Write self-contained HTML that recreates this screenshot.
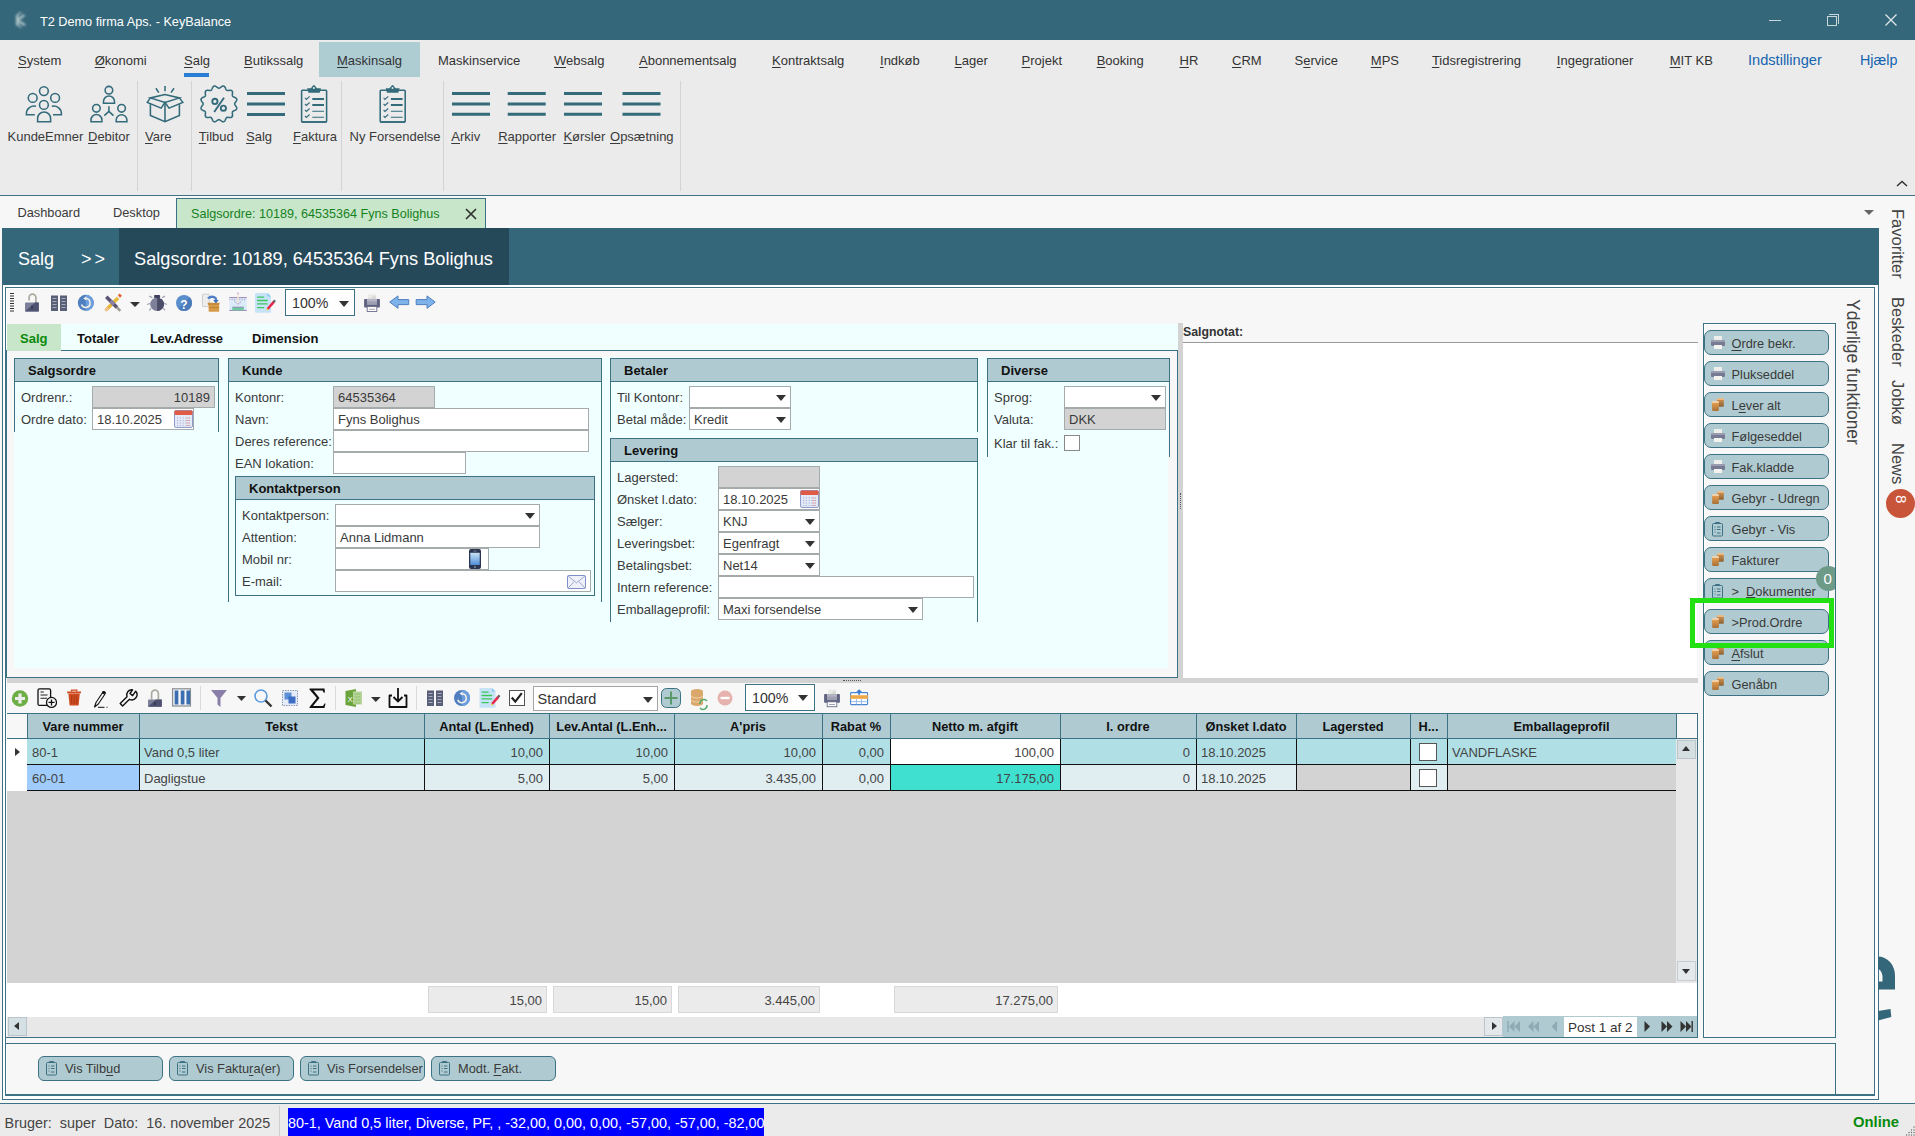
<!DOCTYPE html>
<html><head><meta charset="utf-8">
<style>
*{margin:0;padding:0;box-sizing:border-box}
html,body{width:1915px;height:1136px;overflow:hidden;background:#F7F7F7;font-family:"Liberation Sans",sans-serif;font-size:13px;color:#333}
.a{position:absolute}
.t{position:absolute;white-space:nowrap;line-height:1}
u{text-decoration:underline;text-underline-offset:2px}
svg{position:absolute;overflow:visible}
/* title */
#title{left:0;top:0;width:1915px;height:40px;background:#35677A}
#menu{left:0;top:40px;width:1915px;height:155px;background:#EBEBEB}
.mi{position:absolute;top:54px;font-size:13px;color:#3A3A3A;white-space:nowrap;line-height:14px}
.rl{position:absolute;top:130px;font-size:13px;color:#3A3A3A;white-space:nowrap;line-height:14px}
.rsep{position:absolute;top:81px;width:1px;height:110px;background:#D4D4D4}
.gh{position:absolute;height:24px;background:#AFCBD1;border:1px solid #3D7184;border-bottom:2px solid #3D7184;font-weight:bold;color:#111;font-size:13px;line-height:20px;padding-left:13px}
.gs{position:absolute;width:1px;background:#3D7184}
.lb{position:absolute;font-size:13px;color:#3A3A3A;white-space:nowrap;line-height:14px}
.in{position:absolute;height:22px;background:#fff;border:1px solid #C8C8C8;font-size:13px;color:#333;line-height:20px;padding-left:4px;white-space:nowrap}
.gray{background:#D3D3D3}
.dd{position:absolute;width:0;height:0;border-left:5px solid transparent;border-right:5px solid transparent;border-top:6px solid #333}
</style></head><body>
<svg style="left:0;top:0" width="0" height="0"><defs><linearGradient id="gF" x1="0" y1="0" x2="0" y2="1"><stop offset="0" stop-color="#F2D4AE"/><stop offset="0.17" stop-color="#F0CDA0"/><stop offset="0.22" stop-color="#E09A4E"/><stop offset="1" stop-color="#A87238"/></linearGradient><linearGradient id="gB" x1="0" y1="0" x2="0" y2="1"><stop offset="0" stop-color="#EBBE86"/><stop offset="0.17" stop-color="#E8B880"/><stop offset="0.22" stop-color="#C98B4C"/><stop offset="1" stop-color="#8E6232"/></linearGradient></defs></svg>
<!-- TITLE BAR -->
<div id="title" class="a">
  <svg style="left:10px;top:9px" width="20" height="22"><defs><filter id="bl" x="-50%" y="-50%" width="200%" height="200%"><feGaussianBlur stdDeviation="1.1"/></filter></defs><g filter="url(#bl)" stroke="#A9BFC5" fill="none" stroke-linecap="round"><path d="M7.2 6.8V15.6" stroke-width="2.6"/><path d="M8 11L13.6 6.5" stroke-width="2.4"/><path d="M8.6 12.2L14.2 15.6" stroke-width="2.4"/><path d="M6.8 6.5L10.6 3.6M8 15.4L10.6 18.4" stroke-width="1.4"/></g></svg>
  <div class="t" style="left:40px;top:16px;font-size:12.7px;color:#fff">T2 Demo firma Aps. - KeyBalance</div>
  <div class="a" style="left:1769px;top:20px;width:12px;height:1px;background:#C9D6DA"></div>
  <div class="a" style="left:1829px;top:14px;width:10px;height:10px;border:1px solid #C9D6DA;border-left:0;border-bottom:0"></div>
  <div class="a" style="left:1827px;top:16px;width:10px;height:10px;border:1px solid #C9D6DA"></div>
  <svg style="left:1885px;top:14px" width="12" height="12"><path d="M0.5 0.5L11.5 11.5M11.5 0.5L0.5 11.5" stroke="#E2EAEC" stroke-width="1.2"/></svg>
</div>
<!-- MENU + RIBBON -->
<div id="menu" class="a"></div>
<div class="a" style="left:319px;top:42px;width:101px;height:35px;background:#AECDD3"></div>
<div class="a" style="left:184px;top:73px;width:25px;height:4px;background:#2A7FD4"></div>
<div class="mi" style="left:18px;color:#333"><u>S</u>ystem</div>
<div class="mi" style="left:94.7px;color:#333"><u>Ø</u>konomi</div>
<div class="mi" style="left:184px;color:#333"><u>S</u>alg</div>
<div class="mi" style="left:244px;color:#333"><u>B</u>utikssalg</div>
<div class="mi" style="left:337px;color:#333"><u>M</u>askinsalg</div>
<div class="mi" style="left:438px;color:#333">Maskinservice</div>
<div class="mi" style="left:554px;color:#333"><u>W</u>ebsalg</div>
<div class="mi" style="left:639px;color:#333"><u>A</u>bonnementsalg</div>
<div class="mi" style="left:772px;color:#333"><u>K</u>ontraktsalg</div>
<div class="mi" style="left:880px;color:#333"><u>I</u>ndkøb</div>
<div class="mi" style="left:954.6px;color:#333"><u>L</u>ager</div>
<div class="mi" style="left:1021.6px;color:#333"><u>P</u>rojekt</div>
<div class="mi" style="left:1096.7px;color:#333"><u>B</u>ooking</div>
<div class="mi" style="left:1179.5px;color:#333"><u>H</u>R</div>
<div class="mi" style="left:1232px;color:#333"><u>C</u>RM</div>
<div class="mi" style="left:1294.6px;color:#333">S<u>e</u>rvice</div>
<div class="mi" style="left:1370.8px;color:#333"><u>M</u>PS</div>
<div class="mi" style="left:1431.9px;color:#333"><u>T</u>idsregistrering</div>
<div class="mi" style="left:1556.8px;color:#333"><u>I</u>ngegrationer</div>
<div class="mi" style="left:1669.7px;color:#333"><u>M</u>IT KB</div>
<div class="mi" style="left:1748px;top:53px;font-size:14.6px;color:#1565B0">Indstillinger</div>
<div class="mi" style="left:1860px;top:53px;font-size:14.3px;color:#1565B0">Hjælp</div>
<svg style="left:1896px;top:180px" width="12" height="8"><path d="M1 6L6 1.5L11 6" fill="none" stroke="#333" stroke-width="1.5"/></svg>

<div class="rsep" style="left:137px"></div>
<div class="rsep" style="left:191px"></div>
<div class="rsep" style="left:341px"></div>
<div class="rsep" style="left:443px"></div>
<div class="rsep" style="left:680px"></div>
<!-- KundeEmner -->
<svg style="left:0;top:0" width="700" height="130" fill="none" stroke="#336B7B" stroke-width="1.55">
<circle cx="43.9" cy="91.1" r="4.4"/>
<circle cx="32.7" cy="97.9" r="4.4"/>
<circle cx="55.1" cy="97.9" r="4.4"/>
<circle cx="43.9" cy="104.9" r="4.4"/>
<path d="M37.6 121.7V118.5A6.5 6.5 0 0 1 50.6 118.5V121.7Z"/>
<path d="M36 106.3A7.6 7.6 0 0 0 26.4 113.5V114.7H34.8"/>
<path d="M51.8 106.3A7.6 7.6 0 0 1 61.4 113.5V114.7H53"/>
<!-- Debitor -->
<circle cx="108.9" cy="90.2" r="3.8"/>
<path d="M103.5 103.2V101.5A5.5 5.5 0 0 1 114.5 101.5V103.2Z"/>
<circle cx="96.4" cy="108.3" r="3.8"/>
<path d="M91 121.7V120A5.45 5.45 0 0 1 101.9 120V121.7Z"/>
<circle cx="121.6" cy="108.3" r="3.8"/>
<path d="M116.2 121.7V120A5.35 5.35 0 0 1 126.9 120V121.7Z"/>
<path d="M108.9 106.2V111.4L104.3 115.6M108.9 111.4L113.5 115.6"/>
<!-- Vare -->
<path d="M155.9 88.2L158.8 92.6M165 86V91.3M174 88.2L171 92.6"/>
<path d="M165 94.5L150.4 97.9L165 102.4L179.4 97.9Z"/>
<path d="M150.4 97.9L147.3 102.4L161.1 108.1L165 102.4L169 108.1L182.8 102.4L179.4 97.9"/>
<path d="M150.4 104.2V115.4L165 121.7L179.4 115.4V104.2M165 102.4V121.7"/>
<!-- Tilbud -->
<path d="M218.90 88.15 L219.18 88.12 L219.45 88.04 L219.74 87.91 L220.03 87.74 L220.33 87.54 L220.64 87.31 L220.97 87.07 L221.30 86.83 L221.64 86.60 L221.99 86.40 L222.34 86.23 L222.68 86.11 L223.02 86.04 L223.36 86.03 L223.68 86.08 L223.98 86.19 L224.26 86.37 L224.52 86.60 L224.76 86.88 L224.98 87.20 L225.18 87.55 L225.36 87.91 L225.53 88.29 L225.69 88.66 L225.84 89.01 L226.00 89.34 L226.17 89.64 L226.35 89.89 L226.55 90.10 L226.78 90.26 L227.03 90.37 L227.31 90.44 L227.62 90.47 L227.96 90.47 L228.32 90.45 L228.71 90.40 L229.11 90.36 L229.51 90.31 L229.92 90.29 L230.33 90.28 L230.71 90.31 L231.07 90.38 L231.40 90.49 L231.70 90.65 L231.95 90.85 L232.15 91.10 L232.31 91.40 L232.42 91.73 L232.49 92.09 L232.52 92.47 L232.51 92.88 L232.49 93.29 L232.44 93.69 L232.40 94.09 L232.35 94.48 L232.33 94.84 L232.33 95.18 L232.36 95.49 L232.43 95.77 L232.54 96.03 L232.70 96.25 L232.91 96.45 L233.16 96.63 L233.46 96.80 L233.79 96.96 L234.14 97.11 L234.51 97.27 L234.89 97.44 L235.25 97.62 L235.60 97.82 L235.92 98.04 L236.20 98.28 L236.43 98.54 L236.61 98.82 L236.72 99.12 L236.77 99.44 L236.76 99.78 L236.69 100.12 L236.57 100.46 L236.40 100.81 L236.20 101.16 L235.97 101.50 L235.73 101.83 L235.49 102.16 L235.26 102.47 L235.06 102.77 L234.89 103.06 L234.76 103.35 L234.68 103.62 L234.65 103.90 L234.68 104.18 L234.76 104.45 L234.89 104.74 L235.06 105.03 L235.26 105.33 L235.49 105.64 L235.73 105.97 L235.97 106.30 L236.20 106.64 L236.40 106.99 L236.57 107.34 L236.69 107.68 L236.76 108.02 L236.77 108.36 L236.72 108.68 L236.61 108.98 L236.43 109.26 L236.20 109.52 L235.92 109.76 L235.60 109.98 L235.25 110.18 L234.89 110.36 L234.51 110.53 L234.14 110.69 L233.79 110.84 L233.46 111.00 L233.16 111.17 L232.91 111.35 L232.70 111.55 L232.54 111.78 L232.43 112.03 L232.36 112.31 L232.33 112.62 L232.33 112.96 L232.35 113.32 L232.40 113.71 L232.44 114.11 L232.49 114.51 L232.51 114.92 L232.52 115.33 L232.49 115.71 L232.42 116.07 L232.31 116.40 L232.15 116.70 L231.95 116.95 L231.70 117.15 L231.40 117.31 L231.07 117.42 L230.71 117.49 L230.33 117.52 L229.92 117.51 L229.51 117.49 L229.11 117.44 L228.71 117.40 L228.32 117.35 L227.96 117.33 L227.62 117.33 L227.31 117.36 L227.03 117.43 L226.78 117.54 L226.55 117.70 L226.35 117.91 L226.17 118.16 L226.00 118.46 L225.84 118.79 L225.69 119.14 L225.53 119.51 L225.36 119.89 L225.18 120.25 L224.98 120.60 L224.76 120.92 L224.52 121.20 L224.26 121.43 L223.98 121.61 L223.68 121.72 L223.36 121.77 L223.02 121.76 L222.68 121.69 L222.34 121.57 L221.99 121.40 L221.64 121.20 L221.30 120.97 L220.97 120.73 L220.64 120.49 L220.33 120.26 L220.03 120.06 L219.74 119.89 L219.45 119.76 L219.18 119.68 L218.90 119.65 L218.62 119.68 L218.35 119.76 L218.06 119.89 L217.77 120.06 L217.47 120.26 L217.16 120.49 L216.83 120.73 L216.50 120.97 L216.16 121.20 L215.81 121.40 L215.46 121.57 L215.12 121.69 L214.78 121.76 L214.44 121.77 L214.12 121.72 L213.82 121.61 L213.54 121.43 L213.28 121.20 L213.04 120.92 L212.82 120.60 L212.62 120.25 L212.44 119.89 L212.27 119.51 L212.11 119.14 L211.96 118.79 L211.80 118.46 L211.63 118.16 L211.45 117.91 L211.25 117.70 L211.03 117.54 L210.77 117.43 L210.49 117.36 L210.18 117.33 L209.84 117.33 L209.48 117.35 L209.09 117.40 L208.69 117.44 L208.29 117.49 L207.88 117.51 L207.47 117.52 L207.09 117.49 L206.73 117.42 L206.40 117.31 L206.10 117.15 L205.85 116.95 L205.65 116.70 L205.49 116.40 L205.38 116.07 L205.31 115.71 L205.28 115.33 L205.29 114.92 L205.31 114.51 L205.36 114.11 L205.40 113.71 L205.45 113.32 L205.47 112.96 L205.47 112.62 L205.44 112.31 L205.37 112.03 L205.26 111.78 L205.10 111.55 L204.89 111.35 L204.64 111.17 L204.34 111.00 L204.01 110.84 L203.66 110.69 L203.29 110.53 L202.91 110.36 L202.55 110.18 L202.20 109.98 L201.88 109.76 L201.60 109.52 L201.37 109.26 L201.19 108.98 L201.08 108.68 L201.03 108.36 L201.04 108.02 L201.11 107.68 L201.23 107.34 L201.40 106.99 L201.60 106.64 L201.83 106.30 L202.07 105.97 L202.31 105.64 L202.54 105.33 L202.74 105.03 L202.91 104.74 L203.04 104.45 L203.12 104.18 L203.15 103.90 L203.12 103.62 L203.04 103.35 L202.91 103.06 L202.74 102.77 L202.54 102.47 L202.31 102.16 L202.07 101.83 L201.83 101.50 L201.60 101.16 L201.40 100.81 L201.23 100.46 L201.11 100.12 L201.04 99.78 L201.03 99.44 L201.08 99.12 L201.19 98.82 L201.37 98.54 L201.60 98.28 L201.88 98.04 L202.20 97.82 L202.55 97.62 L202.91 97.44 L203.29 97.27 L203.66 97.11 L204.01 96.96 L204.34 96.80 L204.64 96.63 L204.89 96.45 L205.10 96.25 L205.26 96.03 L205.37 95.77 L205.44 95.49 L205.47 95.18 L205.47 94.84 L205.45 94.48 L205.40 94.09 L205.36 93.69 L205.31 93.29 L205.29 92.88 L205.28 92.47 L205.31 92.09 L205.38 91.73 L205.49 91.40 L205.65 91.10 L205.85 90.85 L206.10 90.65 L206.40 90.49 L206.73 90.38 L207.09 90.31 L207.47 90.28 L207.88 90.29 L208.29 90.31 L208.69 90.36 L209.09 90.40 L209.48 90.45 L209.84 90.47 L210.18 90.47 L210.49 90.44 L210.77 90.37 L211.03 90.26 L211.25 90.10 L211.45 89.89 L211.63 89.64 L211.80 89.34 L211.96 89.01 L212.11 88.66 L212.27 88.29 L212.44 87.91 L212.62 87.55 L212.82 87.20 L213.04 86.88 L213.28 86.60 L213.54 86.37 L213.82 86.19 L214.12 86.08 L214.44 86.03 L214.78 86.04 L215.12 86.11 L215.46 86.23 L215.81 86.40 L216.16 86.60 L216.50 86.83 L216.83 87.07 L217.16 87.31 L217.47 87.54 L217.77 87.74 L218.06 87.91 L218.35 88.04 L218.62 88.12 L218.90 88.15Z"/>
<!-- Salg lines -->
<path d="M247 93.4H285M247 103.9H285M247 114.4H285" stroke-width="3"/>
<!-- Faktura clipboard -->
<g id="clip1">
<rect x="301.6" y="90.3" width="25" height="31.6" rx="0.8"/>
<path d="M301.6 122H326.6" stroke-width="1.6"/>
<path d="M307.1 88.3H310.8L313.3 85.2Q313.9 84.6 314.5 85.2L317 88.3H321L319.7 92.7H308.4Z" fill="#336B7B" stroke="none"/>
<circle cx="313.9" cy="88.1" r="1" fill="#EBEBEB" stroke="none"/>
<path d="M305 97.9L306.4 99.4L309.6 96.4M305 104L306.4 105.5L309.6 102.5M305 110L306.4 111.5L309.6 108.5M305 116L306.4 117.5L309.6 114.5" stroke-width="1.1"/>
<path d="M312.3 99H324M312.3 105H324" stroke-width="1.8"/>
<path d="M312.3 111.2H324M312.3 117.3H324" stroke-width="1.1"/>
</g>
<g transform="translate(78.6 0)">
<rect x="301.6" y="90.3" width="25" height="31.6" rx="0.8"/>
<path d="M301.6 122H326.6" stroke-width="1.6"/>
<path d="M307.1 88.3H310.8L313.3 85.2Q313.9 84.6 314.5 85.2L317 88.3H321L319.7 92.7H308.4Z" fill="#336B7B" stroke="none"/>
<circle cx="313.9" cy="88.1" r="1" fill="#EBEBEB" stroke="none"/>
<path d="M305 97.9L306.4 99.4L309.6 96.4M305 104L306.4 105.5L309.6 102.5M305 110L306.4 111.5L309.6 108.5M305 116L306.4 117.5L309.6 114.5" stroke-width="1.1"/>
<path d="M312.3 99H324M312.3 105H324" stroke-width="1.8"/>
<path d="M312.3 111.2H324M312.3 117.3H324" stroke-width="1.1"/>
</g>
<path d="M452 93.4H490M452 103.9H490M452 114.2H490M507.7 93.4H545.7M507.7 103.9H545.7M507.7 114.2H545.7M564 93.4H602M564 103.9H602M564 114.2H602M622.5 93.4H660.5M622.5 103.9H660.5M622.5 114.2H660.5" stroke-width="3"/>
</svg>
<svg style="left:0;top:0" width="240" height="130" fill="none" stroke="#336B7B"><circle cx="214.9" cy="101.4" r="2.6" stroke-width="1.9"/><circle cx="223.4" cy="108.2" r="2.6" stroke-width="1.9"/><path d="M224 97.8L214.2 112" stroke-width="1.9"/></svg>
<div class="rl" style="left:7.5px">KundeEmner</div>
<div class="rl" style="left:88px"><u>D</u>ebitor</div>
<div class="rl" style="left:145px"><u>V</u>are</div>
<div class="rl" style="left:198.8px"><u>T</u>ilbud</div>
<div class="rl" style="left:246px"><u>S</u>alg</div>
<div class="rl" style="left:293px"><u>F</u>aktura</div>
<div class="rl" style="left:349.5px">Ny Forsendelse</div>
<div class="rl" style="left:451.3px"><u>A</u>rkiv</div>
<div class="rl" style="left:498.2px"><u>R</u>apporter</div>
<div class="rl" style="left:563.4px"><u>K</u>ørsler</div>
<div class="rl" style="left:610px"><u>O</u>psætning</div>
<div class="a" style="left:0;top:195px;width:1915px;height:1px;background:#3D7184"></div>

<div class="a" style="left:0;top:196px;width:1915px;height:31px;background:#F7F7F7"></div>
<div class="t" style="left:17.4px;top:206.5px;font-size:12.8px;color:#3A3A3A">Dashboard</div>
<div class="t" style="left:113px;top:206.5px;font-size:12.8px;color:#3A3A3A">Desktop</div>
<div class="a" style="left:176px;top:198px;width:310px;height:30px;background:#C8E6C9;border:1px solid #3D7184;border-bottom:0"></div>
<div class="t" style="left:191px;top:207.5px;font-size:12.6px;color:#16821E">Salgsordre: 10189, 64535364 Fyns Bolighus</div>
<svg style="left:465px;top:208px" width="12" height="12"><path d="M1 1L11 11M11 1L1 11" stroke="#333" stroke-width="1.7"/></svg>
<div class="dd" style="left:1864px;top:210px;border-left-width:5px;border-right-width:5px;border-top:5px solid #666"></div>
<!-- header band -->
<div class="a" style="left:2px;top:228px;width:1877px;height:57px;background:#35677A"></div>
<div class="a" style="left:119px;top:228px;width:390px;height:57px;background:#26495A"></div>
<div class="t" style="left:18px;top:250px;font-size:18px;color:#fff">Salg</div>
<div class="t" style="left:81px;top:250px;font-size:18px;color:#fff;letter-spacing:3px">&gt;&gt;</div>
<div class="t" style="left:134px;top:250px;font-size:18.2px;color:#fff">Salgsordre: 10189, 64535364 Fyns Bolighus</div>

<!-- outer frame -->
<div class="a" style="left:2px;top:285px;width:1877px;height:815px;border:1px solid #3D7184;border-top:0;background:#fff"></div>
<div class="a" style="left:5px;top:287px;width:1870px;height:809px;border:1px solid #3D7184;border-bottom:2px solid #3D7184;background:#F7F7F7;box-shadow:inset 1px 1px 0 #fff"></div>
<!-- toolbar -->
<svg style="left:0;top:0" width="450" height="330">
<path d="M10 293.5H14M10 296H14M10 298.5H14M10 301H14M10 303.5H14M10 306H14M10 308.5H14M10 311H14" stroke="#333" stroke-width="1.2"/>
<!-- lock -->
<path d="M29.1 300.5V297.5A3.4 3.4 0 0 1 35.9 297.5V303" fill="none" stroke="#A9AAA0" stroke-width="1.7"/>
<rect x="25" y="302.5" width="13.8" height="9" rx="0.8" fill="#7C7F9A"/>
<path d="M25 311.5L35 302.5H38.8V311.5Z" fill="#4E5270"/>
<path d="M32 305.5V309" stroke="#33364A" stroke-width="1.6"/>
<!-- columns -->
<rect x="51" y="295.5" width="7" height="15.5" fill="#5A5F78"/>
<rect x="60" y="295.5" width="7" height="15.5" fill="#5A5F78"/>
<path d="M52.5 298.5H56.5M52.5 301.5H56.5M52.5 304.5H56.5M52.5 307.5H56.5M61.5 298.5H65.5M61.5 301.5H65.5M61.5 304.5H65.5M61.5 307.5H65.5" stroke="#A9ADBF" stroke-width="1"/>
<!-- refresh -->
<circle cx="85.8" cy="302.8" r="8" fill="#4F7FBF"/>
<path d="M85.8 294.8A8 8 0 0 1 93.8 302.8A8 8 0 0 1 85.8 310.8Z" fill="#6C9EDD"/>
<path d="M85.6 298.6A4.4 4.4 0 1 1 81.5 304.5" fill="none" stroke="#F4F0E8" stroke-width="1.5"/>
<path d="M83.3 298.4L86.3 296.2V300.6Z" fill="#F4F0E8"/>
<!-- pencil cross -->
<path d="M106.5 309.5L118.5 297.5" stroke="#E6B838" stroke-width="3.4"/>
<path d="M105.3 310.6L108 307.9" stroke="#F0C090" stroke-width="3"/>
<path d="M118 298L119 297" stroke="#E8EEF0" stroke-width="3.4"/>
<path d="M119 296.5L120.8 294.7" stroke="#E2602E" stroke-width="3.2"/>
<path d="M106.3 296.8L117 307.5" stroke="#5C5474" stroke-width="3.6"/>
<path d="M110.5 301L114 304.5" stroke="#8A80A8" stroke-width="3.6"/>
<path d="M117 307.5L120.3 310.8" stroke="#9C9C94" stroke-width="2.6"/>
<path d="M130 302H140L135 307Z" fill="#333"/>
<!-- bug -->
<path d="M152.3 297.6L149.2 296.1M150.3 303.4L147.1 304.5M151.2 308.2L149.2 310.4M162.1 297.6L165 296.1M164 303.4L166.9 304.5M163.2 308.2L165 310.4" stroke="#A3A5B5" stroke-width="1.3"/>
<ellipse cx="157.1" cy="304.3" rx="6.9" ry="6.7" fill="#7E809A"/>
<path d="M157.1 297.6A6.9 6.7 0 0 1 157.1 311Z" fill="#4A4C68"/>
<rect x="154.1" y="295" width="6" height="3" rx="0.8" fill="#3E4060"/>
<path d="M152.6 298.2H154.2M160 298.2H161.6" stroke="#D8D8E0" stroke-width="1"/>
<!-- help -->
<circle cx="184" cy="303" r="8" fill="#5B8FCC"/>
<path d="M189.7 297.3A8 8 0 0 1 178.3 308.7Z" fill="#4A7BBB"/>
<text x="184" y="308.5" font-family="Liberation Sans" font-weight="bold" font-size="12" fill="#fff" text-anchor="middle">?</text>
<!-- box with arrow -->
<rect x="202.5" y="294.2" width="6.8" height="12.3" rx="0.6" fill="#EDEDED" stroke="#C4C4C4" stroke-width="0.8"/>
<path d="M207.5 302.8H219.8L219 305.3H208.2Z" fill="#C98E3A"/>
<rect x="208.6" y="305" width="10.6" height="6.7" rx="0.6" fill="#D79B48"/>
<path d="M209 307.5H219" stroke="#B57A2E" stroke-width="0.7"/>
<path d="M208 298.6A5.2 5.2 0 0 1 215.6 298.2L216.2 300" fill="none" stroke="#4F7FC6" stroke-width="2.3"/>
<path d="M213.2 300H218.7L215.9 303.6Z" fill="#3F6FB8"/>
<!-- tray -->
<rect x="229.3" y="297.3" width="17.5" height="13.3" fill="#DCEBF8"/>
<path d="M229.3 297.6H246.8M229.3 310.4H246.8" stroke="#9276B0" stroke-width="0.9"/>
<path d="M229.3 299.6H246.8" stroke="#9276B0" stroke-width="0.8" stroke-dasharray="0.9 1.6"/>
<path d="M238 293.2V303" stroke="#F2E4D6" stroke-width="1.6"/>
<path d="M238 292.8V293.8" stroke="#9276B0" stroke-width="1.2"/>
<path d="M234.3 300.8L238 304.4L241.7 300.8" fill="none" stroke="#9276B0" stroke-width="0.9" stroke-dasharray="1 0.7"/>
<rect x="232.3" y="307.2" width="11.5" height="3.2" fill="#6CCB9E"/>
<path d="M232.3 307.2H243.8" stroke="#9276B0" stroke-width="0.8"/>
<!-- doc pencil -->
<path d="M256 293H267.5L271 296.5V311.8A1 1 0 0 1 270 312.8H256A1 1 0 0 1 255 311.8V294A1 1 0 0 1 256 293Z" fill="#C7E3F8"/>
<path d="M267.5 293V296.5H271Z" fill="#8CC8F0"/>
<path d="M257.6 297.1H263.7M257.6 300.5H267.2M257.6 303.9H267.2M257.6 307.6H263.7" stroke="#3CC65A" stroke-width="1.3" stroke-linecap="round"/>
<path d="M267.6 309L273.8 301.8" stroke="#E8284A" stroke-width="2.6"/>
<path d="M273.4 302.2L275 300.3" stroke="#666" stroke-width="2.4"/>
<path d="M266.3 310.6L267 308.2L268.9 309.8Z" fill="#F4C43A"/>
<!-- printer -->
<use href="#prn" transform="translate(-460 -395.2)"/>
<!-- arrows -->
<path d="M389.7 302.1L398 295.9V299.6H408.7V304.6H398V308.3Z" fill="#7DB3E8" stroke="#4F7FC0" stroke-width="1"/>
<path d="M435.2 302.1L427 295.9V299.6H416.2V304.6H427V308.3Z" fill="#7DB3E8" stroke="#4F7FC0" stroke-width="1"/>
</svg>
<div class="a" style="left:285px;top:289px;width:70px;height:27px;border:1px solid #3D7184;background:#fff"></div>
<div class="t" style="left:292px;top:295.5px;font-size:14.2px;color:#333">100%</div>
<div class="dd" style="left:339px;top:301px"></div>
<!-- form tabs -->
<div class="a" style="left:7px;top:324px;width:1171px;height:27px;background:#F0FFFF"></div>
<div class="a" style="left:7px;top:324px;width:54px;height:27px;background:#C8E6C9"></div>
<div class="a" style="left:61px;top:350px;width:1117px;height:1px;background:#3D7184"></div>
<div class="a" style="left:5px;top:350px;width:2px;height:328px;background:#3D7184"></div>
<div class="a" style="left:1177px;top:350px;width:1px;height:328px;background:#3D7184"></div>
<div class="a" style="left:5px;top:677px;width:1173px;height:1px;background:#3D7184"></div>
<div class="a" style="left:14px;top:357px;width:1154px;height:311px;background:#F0FFFF"></div>
<div class="t" style="left:20px;top:331.5px;font-size:13px;font-weight:bold;color:#0A8A0A">Salg</div>
<div class="t" style="left:77px;top:331.5px;font-size:13px;font-weight:bold;color:#111">Totaler</div>
<div class="t" style="left:150px;top:331.5px;font-size:13px;font-weight:bold;color:#111;letter-spacing:-0.35px">Lev.Adresse</div>
<div class="t" style="left:252px;top:331.5px;font-size:13px;font-weight:bold;color:#111">Dimension</div>
<!-- splitter -->
<div class="a" style="left:1178px;top:323px;width:5px;height:360px;background:#D3D3D3"></div>
<div class="a" style="left:7px;top:678px;width:1176px;height:5px;background:#D3D3D3"></div>
<div class="a" style="left:14px;top:358px;width:205px;height:24px;background:#AFCBD1;border:1px solid #3D7184;border-bottom:1px solid #3D7184"></div>
<div class="t" style="left:28px;top:363.5px;font-weight:bold;font-size:13px;color:#111">Salgsordre</div>
<div class="a" style="left:14px;top:381px;width:1px;height:51px;background:#3D7184"></div>
<div class="a" style="left:218px;top:381px;width:1px;height:51px;background:#3D7184"></div>
<div class="lb" style="left:21px;top:390.5px">Ordrenr.:</div>
<div class="a" style="left:92px;top:386px;width:123px;height:22px;background:#D3D3D3;border:1px solid #A5ABAB"></div>
<div class="lb" style="left:92px;width:118px;text-align:right;top:390.5px">10189</div>
<div class="lb" style="left:21px;top:412.5px">Ordre dato:</div>
<div class="a" style="left:92px;top:408px;width:102px;height:22px;background:#fff;border:1px solid #A5ABAB"></div>
<div class="lb" style="left:97px;top:412.5px">18.10.2025</div>
<svg style="left:174px;top:410px" width="19" height="18"><rect x="0.5" y="0.5" width="18" height="17" rx="1.5" fill="#E4E9F6" stroke="#8E9CCB"/><rect x="0.5" y="0.5" width="18" height="4.5" rx="1" fill="#E05A48"/><path d="M3 8H16M3 10.5H16M3 13H16M3 15.5H16" stroke="#A9B4DA" stroke-width="1" stroke-dasharray="1.2 1.6"/><path d="M12.5 8H16M12.5 10.5H16M12.5 13H16M12.5 15.5H16" stroke="#E9826F" stroke-width="1" stroke-dasharray="1.2 1.6"/></svg>
<div class="a" style="left:228px;top:358px;width:374px;height:24px;background:#AFCBD1;border:1px solid #3D7184;border-bottom:1px solid #3D7184"></div>
<div class="t" style="left:242px;top:363.5px;font-weight:bold;font-size:13px;color:#111">Kunde</div>
<div class="a" style="left:228px;top:381px;width:1px;height:221px;background:#3D7184"></div>
<div class="a" style="left:601px;top:381px;width:1px;height:221px;background:#3D7184"></div>
<div class="lb" style="left:235px;top:390.5px">Kontonr:</div>
<div class="a" style="left:333px;top:386px;width:102px;height:22px;background:#D3D3D3;border:1px solid #A5ABAB"></div>
<div class="lb" style="left:338px;top:390.5px">64535364</div>
<div class="lb" style="left:235px;top:412.5px">Navn:</div>
<div class="a" style="left:333px;top:408px;width:256px;height:22px;background:#fff;border:1px solid #A5ABAB"></div>
<div class="lb" style="left:338px;top:412.5px">Fyns Bolighus</div>
<div class="lb" style="left:235px;top:434.5px">Deres reference:</div>
<div class="a" style="left:333px;top:430px;width:256px;height:22px;background:#fff;border:1px solid #A5ABAB"></div>
<div class="lb" style="left:235px;top:456.5px">EAN lokation:</div>
<div class="a" style="left:333px;top:452px;width:133px;height:22px;background:#fff;border:1px solid #A5ABAB"></div>
<div class="a" style="left:235px;top:476px;width:360px;height:24px;background:#AFCBD1;border:1px solid #3D7184;border-bottom:1px solid #3D7184"></div>
<div class="t" style="left:249px;top:481.5px;font-weight:bold;font-size:13px;color:#111">Kontaktperson</div>
<div class="a" style="left:235px;top:499px;width:360px;height:97px;border:1px solid #3D7184;border-top:0"></div>
<div class="lb" style="left:242px;top:508.5px">Kontaktperson:</div>
<div class="a" style="left:335px;top:504px;width:205px;height:22px;background:#fff;border:1px solid #A5ABAB"></div>
<div class="dd" style="left:525px;top:513px"></div>
<div class="lb" style="left:242px;top:530.5px">Attention:</div>
<div class="a" style="left:335px;top:526px;width:205px;height:22px;background:#fff;border:1px solid #A5ABAB"></div>
<div class="lb" style="left:340px;top:530.5px">Anna Lidmann</div>
<div class="lb" style="left:242px;top:552.5px">Mobil nr:</div>
<div class="a" style="left:335px;top:548px;width:154px;height:22px;background:#fff;border:1px solid #A5ABAB"></div>
<svg style="left:469px;top:549px" width="12" height="20"><defs><linearGradient id="ph" x1="0" y1="0" x2="0" y2="1"><stop offset="0" stop-color="#C9E2F7"/><stop offset="1" stop-color="#4F8FD8"/></linearGradient></defs><rect x="0" y="0" width="12" height="20" rx="2" fill="#2A3550"/><rect x="1.3" y="3.8" width="9.4" height="12.2" fill="url(#ph)"/><path d="M4.5 2H7.5" stroke="#8A94A8" stroke-width="0.8"/><path d="M5 18H7" stroke="#B8C0CC" stroke-width="0.9"/></svg>
<div class="lb" style="left:242px;top:574.5px">E-mail:</div>
<div class="a" style="left:335px;top:570px;width:256px;height:22px;background:#fff;border:1px solid #A5ABAB"></div>
<svg style="left:567px;top:575px" width="19" height="14"><rect x="0.5" y="0.5" width="18" height="13" rx="1" fill="#F0F1F8" stroke="#7F90C8"/><path d="M1 1L9.5 7.8L18 1M1 13L7 6.8M18 13L12 6.8" fill="none" stroke="#9AA8D2" stroke-width="1"/></svg>
<div class="a" style="left:610px;top:358px;width:368px;height:24px;background:#AFCBD1;border:1px solid #3D7184;border-bottom:1px solid #3D7184"></div>
<div class="t" style="left:624px;top:363.5px;font-weight:bold;font-size:13px;color:#111">Betaler</div>
<div class="a" style="left:610px;top:381px;width:1px;height:51px;background:#3D7184"></div>
<div class="a" style="left:977px;top:381px;width:1px;height:51px;background:#3D7184"></div>
<div class="lb" style="left:617px;top:390.5px">Til Kontonr:</div>
<div class="a" style="left:689px;top:386px;width:102px;height:22px;background:#fff;border:1px solid #A5ABAB"></div>
<div class="dd" style="left:776px;top:395px"></div>
<div class="lb" style="left:617px;top:412.5px">Betal m&aring;de:</div>
<div class="a" style="left:689px;top:408px;width:102px;height:22px;background:#fff;border:1px solid #A5ABAB"></div>
<div class="lb" style="left:694px;top:412.5px">Kredit</div>
<div class="dd" style="left:776px;top:417px"></div>
<div class="a" style="left:610px;top:438px;width:368px;height:24px;background:#AFCBD1;border:1px solid #3D7184;border-bottom:1px solid #3D7184"></div>
<div class="t" style="left:624px;top:443.5px;font-weight:bold;font-size:13px;color:#111">Levering</div>
<div class="a" style="left:610px;top:461px;width:1px;height:161px;background:#3D7184"></div>
<div class="a" style="left:977px;top:461px;width:1px;height:161px;background:#3D7184"></div>
<div class="lb" style="left:617px;top:470.5px">Lagersted:</div>
<div class="a" style="left:718px;top:466px;width:102px;height:22px;background:#D3D3D3;border:1px solid #A5ABAB"></div>
<div class="lb" style="left:617px;top:492.5px">&Oslash;nsket l.dato:</div>
<div class="a" style="left:718px;top:488px;width:102px;height:22px;background:#fff;border:1px solid #A5ABAB"></div>
<div class="lb" style="left:723px;top:492.5px">18.10.2025</div>
<svg style="left:800px;top:490px" width="19" height="18"><rect x="0.5" y="0.5" width="18" height="17" rx="1.5" fill="#E4E9F6" stroke="#8E9CCB"/><rect x="0.5" y="0.5" width="18" height="4.5" rx="1" fill="#E05A48"/><path d="M3 8H16M3 10.5H16M3 13H16M3 15.5H16" stroke="#A9B4DA" stroke-width="1" stroke-dasharray="1.2 1.6"/><path d="M12.5 8H16M12.5 10.5H16M12.5 13H16M12.5 15.5H16" stroke="#E9826F" stroke-width="1" stroke-dasharray="1.2 1.6"/></svg>
<div class="lb" style="left:617px;top:514.5px">S&aelig;lger:</div>
<div class="a" style="left:718px;top:510px;width:102px;height:22px;background:#fff;border:1px solid #A5ABAB"></div>
<div class="lb" style="left:723px;top:514.5px">KNJ</div>
<div class="dd" style="left:805px;top:519px"></div>
<div class="lb" style="left:617px;top:536.5px">Leveringsbet:</div>
<div class="a" style="left:718px;top:532px;width:102px;height:22px;background:#fff;border:1px solid #A5ABAB"></div>
<div class="lb" style="left:723px;top:536.5px">Egenfragt</div>
<div class="dd" style="left:805px;top:541px"></div>
<div class="lb" style="left:617px;top:558.5px">Betalingsbet:</div>
<div class="a" style="left:718px;top:554px;width:102px;height:22px;background:#fff;border:1px solid #A5ABAB"></div>
<div class="lb" style="left:723px;top:558.5px">Net14</div>
<div class="dd" style="left:805px;top:563px"></div>
<div class="lb" style="left:617px;top:580.5px">Intern reference:</div>
<div class="a" style="left:718px;top:576px;width:256px;height:22px;background:#fff;border:1px solid #A5ABAB"></div>
<div class="lb" style="left:617px;top:602.5px">Emballageprofil:</div>
<div class="a" style="left:718px;top:598px;width:205px;height:22px;background:#fff;border:1px solid #A5ABAB"></div>
<div class="lb" style="left:723px;top:602.5px">Maxi forsendelse</div>
<div class="dd" style="left:908px;top:607px"></div>
<div class="a" style="left:987px;top:358px;width:183px;height:24px;background:#AFCBD1;border:1px solid #3D7184;border-bottom:1px solid #3D7184"></div>
<div class="t" style="left:1001px;top:363.5px;font-weight:bold;font-size:13px;color:#111">Diverse</div>
<div class="a" style="left:987px;top:381px;width:1px;height:76px;background:#3D7184"></div>
<div class="a" style="left:1169px;top:381px;width:1px;height:76px;background:#3D7184"></div>
<div class="lb" style="left:994px;top:390.5px">Sprog:</div>
<div class="a" style="left:1064px;top:386px;width:102px;height:22px;background:#fff;border:1px solid #A5ABAB"></div>
<div class="dd" style="left:1151px;top:395px"></div>
<div class="lb" style="left:994px;top:412.5px">Valuta:</div>
<div class="a" style="left:1064px;top:408px;width:102px;height:22px;background:#D3D3D3;border:1px solid #A5ABAB"></div>
<div class="lb" style="left:1069px;top:412.5px">DKK</div>
<div class="lb" style="left:994px;top:436.5px">Klar til fak.:</div>
<div class="a" style="left:1064px;top:435px;width:16px;height:16px;background:#fff;border:1px solid #888"></div>

<div class="t" style="left:1183px;top:325.8px;font-size:12.3px;font-weight:bold;color:#333">Salgnotat:</div>
<div class="a" style="left:1183px;top:342px;width:515px;height:1px;background:#999"></div>
<div class="a" style="left:1183px;top:343px;width:514px;height:335px;background:#fff"></div>
<div class="a" style="left:1183px;top:678px;width:515px;height:5px;background:#D3D3D3"></div>
<div class="a" style="left:1180px;top:493px;width:1px;height:16px;border-left:1px dotted #555"></div>
<div class="a" style="left:843px;top:680px;width:18px;height:1px;border-top:1px dotted #555"></div>
<div class="a" style="left:1703px;top:323px;width:133px;height:715px;border:1px solid #3D7184;box-shadow:inset 1px 1px 0 #fff"></div>
<div class="a" style="left:1704px;top:330px;width:125px;height:25px;background:#AFCBD1;border:1px solid #3D7184;border-radius:7px"></div>
<div class="t" style="left:1731.5px;top:336.5px;font-size:12.8px;line-height:14px;color:#3A3A3A"><u>O</u>rdre bekr.</div>
<svg style="left:1711px;top:336px" width="14" height="14"><rect x="3" y="0" width="8" height="5" fill="#EDEDEA"/><rect x="0" y="4" width="14" height="6" rx="1" fill="#767A92"/><rect x="0" y="4" width="14" height="2" fill="#9A9DB0"/><rect x="3" y="9" width="8" height="4" fill="#F4F2EE"/></svg>
<div class="a" style="left:1704px;top:361px;width:125px;height:25px;background:#AFCBD1;border:1px solid #3D7184;border-radius:7px"></div>
<div class="t" style="left:1731.5px;top:367.5px;font-size:12.8px;line-height:14px;color:#3A3A3A">Plukseddel</div>
<svg style="left:1711px;top:367px" width="14" height="14"><rect x="3" y="0" width="8" height="5" fill="#EDEDEA"/><rect x="0" y="4" width="14" height="6" rx="1" fill="#767A92"/><rect x="0" y="4" width="14" height="2" fill="#9A9DB0"/><rect x="3" y="9" width="8" height="4" fill="#F4F2EE"/></svg>
<div class="a" style="left:1704px;top:392px;width:125px;height:25px;background:#AFCBD1;border:1px solid #3D7184;border-radius:7px"></div>
<div class="t" style="left:1731.5px;top:398.5px;font-size:12.8px;line-height:14px;color:#3A3A3A">L<u>e</u>ver alt</div>
<svg style="left:1711px;top:397px" width="14" height="15"><rect x="5.9" y="1" width="6.9" height="8.8" rx="0.8" fill="url(#gB)"/><rect x="1.1" y="4.1" width="6.8" height="9.8" rx="0.8" fill="url(#gF)"/></svg>
<div class="a" style="left:1704px;top:423px;width:125px;height:25px;background:#AFCBD1;border:1px solid #3D7184;border-radius:7px"></div>
<div class="t" style="left:1731.5px;top:429.5px;font-size:12.8px;line-height:14px;color:#3A3A3A">Følgeseddel</div>
<svg style="left:1711px;top:429px" width="14" height="14"><rect x="3" y="0" width="8" height="5" fill="#EDEDEA"/><rect x="0" y="4" width="14" height="6" rx="1" fill="#767A92"/><rect x="0" y="4" width="14" height="2" fill="#9A9DB0"/><rect x="3" y="9" width="8" height="4" fill="#F4F2EE"/></svg>
<div class="a" style="left:1704px;top:454px;width:125px;height:25px;background:#AFCBD1;border:1px solid #3D7184;border-radius:7px"></div>
<div class="t" style="left:1731.5px;top:460.5px;font-size:12.8px;line-height:14px;color:#3A3A3A">Fak.kladde</div>
<svg style="left:1711px;top:460px" width="14" height="14"><rect x="3" y="0" width="8" height="5" fill="#EDEDEA"/><rect x="0" y="4" width="14" height="6" rx="1" fill="#767A92"/><rect x="0" y="4" width="14" height="2" fill="#9A9DB0"/><rect x="3" y="9" width="8" height="4" fill="#F4F2EE"/></svg>
<div class="a" style="left:1704px;top:485px;width:125px;height:25px;background:#AFCBD1;border:1px solid #3D7184;border-radius:7px"></div>
<div class="t" style="left:1731.5px;top:491.5px;font-size:12.8px;line-height:14px;color:#3A3A3A">Gebyr - Udregn</div>
<svg style="left:1711px;top:490px" width="14" height="15"><rect x="5.9" y="1" width="6.9" height="8.8" rx="0.8" fill="url(#gB)"/><rect x="1.1" y="4.1" width="6.8" height="9.8" rx="0.8" fill="url(#gF)"/></svg>
<div class="a" style="left:1704px;top:516px;width:125px;height:25px;background:#AFCBD1;border:1px solid #3D7184;border-radius:7px"></div>
<div class="t" style="left:1731.5px;top:522.5px;font-size:12.8px;line-height:14px;color:#3A3A3A">Gebyr - Vis</div>
<svg style="left:1712px;top:521px" width="12" height="16" fill="none" stroke="#3D7184" stroke-width="1"><rect x="0.5" y="2.5" width="10" height="12.5" rx="1"/><path d="M3.5 2.5V1.5H7.5V2.5" /><path d="M2.5 6H3.5M2.5 8.5H3.5M2.5 11H3.5M5 6H8.5M5 8.5H8.5M5 12H8.5"/></svg>
<div class="a" style="left:1704px;top:547px;width:125px;height:25px;background:#AFCBD1;border:1px solid #3D7184;border-radius:7px"></div>
<div class="t" style="left:1731.5px;top:553.5px;font-size:12.8px;line-height:14px;color:#3A3A3A">Fakturer</div>
<svg style="left:1711px;top:552px" width="14" height="15"><rect x="5.9" y="1" width="6.9" height="8.8" rx="0.8" fill="url(#gB)"/><rect x="1.1" y="4.1" width="6.8" height="9.8" rx="0.8" fill="url(#gF)"/></svg>
<div class="a" style="left:1704px;top:578px;width:125px;height:25px;background:#AFCBD1;border:1px solid #3D7184;border-radius:7px"></div>
<div class="t" style="left:1731.5px;top:584.5px;font-size:12.8px;line-height:14px;color:#3A3A3A">&gt;&nbsp; <u style="text-underline-offset:1px">D</u>okumenter</div>
<svg style="left:1712px;top:583px" width="12" height="16" fill="none" stroke="#3D7184" stroke-width="1"><rect x="0.5" y="2.5" width="10" height="12.5" rx="1"/><path d="M3.5 2.5V1.5H7.5V2.5" /><path d="M2.5 6H3.5M2.5 8.5H3.5M2.5 11H3.5M5 6H8.5M5 8.5H8.5M5 12H8.5"/></svg>
<div class="a" style="left:1704px;top:609px;width:125px;height:25px;background:#AFCBD1;border:1px solid #3D7184;border-radius:7px"></div>
<div class="t" style="left:1731.5px;top:615.5px;font-size:12.8px;line-height:14px;color:#3A3A3A">&gt;Prod.Ordre</div>
<svg style="left:1711px;top:614px" width="14" height="15"><rect x="5.9" y="1" width="6.9" height="8.8" rx="0.8" fill="url(#gB)"/><rect x="1.1" y="4.1" width="6.8" height="9.8" rx="0.8" fill="url(#gF)"/></svg>
<div class="a" style="left:1704px;top:640px;width:125px;height:25px;background:#AFCBD1;border:1px solid #3D7184;border-radius:7px"></div>
<div class="t" style="left:1731.5px;top:646.5px;font-size:12.8px;line-height:14px;color:#3A3A3A"><u>A</u>fslut</div>
<svg style="left:1711px;top:645px" width="14" height="15"><rect x="5.9" y="1" width="6.9" height="8.8" rx="0.8" fill="url(#gB)"/><rect x="1.1" y="4.1" width="6.8" height="9.8" rx="0.8" fill="url(#gF)"/></svg>
<div class="a" style="left:1704px;top:671px;width:125px;height:25px;background:#AFCBD1;border:1px solid #3D7184;border-radius:7px"></div>
<div class="t" style="left:1731.5px;top:677.5px;font-size:12.8px;line-height:14px;color:#3A3A3A">Genåbn</div>
<svg style="left:1711px;top:676px" width="14" height="15"><rect x="5.9" y="1" width="6.9" height="8.8" rx="0.8" fill="url(#gB)"/><rect x="1.1" y="4.1" width="6.8" height="9.8" rx="0.8" fill="url(#gF)"/></svg>
<div class="a" style="left:1816px;top:566px;width:25px;height:25px;border-radius:50%;background:#6E9A88"></div>
<div class="t" style="left:1823.5px;top:571px;font-size:15px;color:#fff">0</div>
<div class="a" style="left:1836px;top:560px;width:8px;height:40px;background:#F7F7F7"></div>
<div class="a" style="left:1835px;top:560px;width:1px;height:40px;background:#3D7184"></div>
<div class="a" style="left:1690px;top:598px;width:144px;height:50px;border:5px solid #22E011"></div>
<div class="t" style="left:1843.5px;top:299px;font-size:17.5px;color:#444;writing-mode:vertical-rl">Yderlige funktioner</div>
<div class="t" style="left:1889px;top:208.6px;font-size:16.5px;color:#444;writing-mode:vertical-rl">Favoritter</div>
<div class="t" style="left:1889px;top:297px;font-size:16.5px;color:#444;writing-mode:vertical-rl">Beskeder</div>
<div class="t" style="left:1889px;top:380px;font-size:16.5px;color:#444;writing-mode:vertical-rl">Jobkø</div>
<div class="t" style="left:1889px;top:443px;font-size:16.5px;color:#444;writing-mode:vertical-rl">News</div>
<div class="a" style="left:1886px;top:488.5px;width:29px;height:29px;border-radius:50%;background:#C8553A"></div>
<div class="t" style="left:1894px;top:495px;font-size:15px;color:#fff;writing-mode:vertical-rl">8</div>
<svg style="left:1878px;top:950px" width="37" height="80"><path d="M0 6.5A17 19 0 0 1 17 25.5V39.6H0V31.5H4.5V30A7 10 0 0 0 0 18.5Z" fill="#35677A"/><path d="M0 61L12.5 59L13.3 67L0 70.6Z" fill="#35677A"/></svg>

<svg style="left:0;top:0" width="880" height="720">
<!-- add -->
<circle cx="20" cy="698.5" r="8.2" fill="#6DAE45"/>
<path d="M20 693.5V703.5M15 698.5H25" stroke="#EDEDED" stroke-width="3.2"/>
<!-- doc plus -->
<rect x="38" y="688.8" width="12.6" height="16.6" rx="1.5" fill="none" stroke="#111" stroke-width="1.3"/>
<path d="M40.5 692H43.8M40.5 695H47.5M40.5 698.3H47" stroke="#222" stroke-width="1.1"/>
<circle cx="51.5" cy="702.4" r="5" fill="#F7F7F7" stroke="#111" stroke-width="1.3"/>
<path d="M51.5 699.4V705.4M48.5 702.4H54.5" stroke="#111" stroke-width="1.3"/>
<!-- trash -->
<path d="M67.2 692.4H81" stroke="#CF4A1E" stroke-width="1.8"/>
<path d="M71.5 691.5V690.2H76.8V691.5" fill="none" stroke="#CF4A1E" stroke-width="1.3"/>
<path d="M68.4 693.5H79.8L78.6 705.6H69.6Z" fill="#CF4A1E"/>
<path d="M71.6 695.5V704M74.1 695.5V704M76.6 695.5V704" stroke="#A83A16" stroke-width="0.9"/>
<!-- pencil -->
<path d="M94.5 707L96 702.5L102.8 692.3A1.4 1.4 0 0 1 105.2 693.8L98.3 704Z" fill="none" stroke="#111" stroke-width="1.1" stroke-linejoin="round"/>
<circle cx="103.6" cy="692.6" r="1.6" fill="#111"/>
<path d="M98 707.3H104.5M106.5 707.3H107.5" stroke="#111" stroke-width="1"/>
<!-- wrench -->
<path d="M120.2 703.5L127 696.8A5.2 5.2 0 0 1 132.5 689.8L130 693.5L132.6 695.6L135.7 691.2A5.2 5.2 0 0 1 129.5 699.3L122.6 706Z" fill="none" stroke="#111" stroke-width="1.4" stroke-linejoin="round"/>
<!-- lock -->
<path d="M151.6 699.5V693.5A3.4 3.4 0 0 1 158.4 693.5V699.5" fill="none" stroke="#A9AAA0" stroke-width="1.7"/>
<rect x="148" y="699.5" width="13.8" height="7.3" rx="0.8" fill="#7C7F9A"/>
<path d="M148 706.8L156 699.5H161.8V706.8Z" fill="#4E5270"/>
<path d="M154.8 702V705" stroke="#33364A" stroke-width="1.5"/>
<!-- columns -->
<rect x="172.6" y="688.8" width="17.8" height="17.2" fill="#F4F6F8" stroke="#8E9296" stroke-width="1.3"/>
<path d="M176.5 690.5V704.5M182.6 690.5V704.5M188.3 690.5V704.5" stroke="#3A6EB0" stroke-width="3.7"/>
<path d="M200.5 686V710" stroke="#D9D9D9" stroke-width="1"/>
<!-- funnel -->
<path d="M211 690H227L220.5 698V707L217.5 704.5V698Z" fill="#8A7FA8"/>
<path d="M237 696H246L241.5 701Z" fill="#333"/>
<!-- magnifier -->
<circle cx="261" cy="696" r="6" fill="none" stroke="#5B9BE0" stroke-width="1.6"/>
<path d="M265.5 700.5L271.5 706.5" stroke="#333" stroke-width="2.4"/>
<!-- select -->
<rect x="282.5" y="690.5" width="15" height="15" fill="#E6ECF7" stroke="#8C98B5" stroke-dasharray="1.5 1"/>
<rect x="284.5" y="692.5" width="7" height="7" fill="#5C8FD6"/>
<rect x="288.5" y="696.5" width="7" height="7" fill="#3D6CC4"/>
<!-- sigma -->
<path d="M309.5 688.5H324.5L325 692.5H323.5L322.5 690.5H313.5L319.5 698L313 706H323L324.5 703.5H325.5L324.5 708H309.5V707L316.8 698L309.5 689.5Z" fill="#111"/>
<path d="M335.5 686V710" stroke="#D9D9D9" stroke-width="1"/>
<!-- excel -->
<path d="M345.5 691L356 689V707L345.5 705Z" fill="#6BA43A"/>
<rect x="353" y="691.5" width="9" height="13" fill="#B7D59A"/>
<path d="M354.5 694H360.5M354.5 697H360.5M354.5 700H360.5M354.5 703H360.5" stroke="#8BBE63" stroke-width="0.9"/>
<text x="347.5" y="701.5" font-family="Liberation Sans" font-size="8" fill="#fff">X</text>
<path d="M371 697H380.7L375.8 702Z" fill="#333"/>
<!-- import -->
<path d="M392 695.5H389.5V707H406.5V695.5H404" fill="none" stroke="#111" stroke-width="1.8" stroke-linejoin="round"/>
<path d="M398 688V701M393.5 697L398 701.5L402.5 697" fill="none" stroke="#111" stroke-width="1.8"/>
<path d="M416.5 686V710" stroke="#D9D9D9" stroke-width="1"/>
<!-- columns2 -->
<rect x="427" y="690.5" width="7" height="15.5" fill="#5A5F78"/>
<rect x="436" y="690.5" width="7" height="15.5" fill="#5A5F78"/>
<path d="M428.5 693.5H432.5M428.5 696.5H432.5M428.5 699.5H432.5M428.5 702.5H432.5M437.5 693.5H441.5M437.5 696.5H441.5M437.5 699.5H441.5M437.5 702.5H441.5" stroke="#A9ADBF" stroke-width="1"/>
<!-- refresh -->
<circle cx="462" cy="698" r="8" fill="#4F7FBF"/>
<path d="M462 690A8 8 0 0 1 470 698A8 8 0 0 1 462 706Z" fill="#6C9EDD"/>
<path d="M461.8 693.8A4.4 4.4 0 1 1 457.7 699.7" fill="none" stroke="#F4F0E8" stroke-width="1.5"/>
<path d="M459.5 693.6L462.5 691.4V695.8Z" fill="#F4F0E8"/>
<!-- doc pencil -->
<g transform="translate(224.5 395)">
<path d="M256 293H267.5L271 296.5V311.8A1 1 0 0 1 270 312.8H256A1 1 0 0 1 255 311.8V294A1 1 0 0 1 256 293Z" fill="#C7E3F8"/>
<path d="M267.5 293V296.5H271Z" fill="#8CC8F0"/>
<path d="M257.6 297.1H263.7M257.6 300.5H267.2M257.6 303.9H267.2M257.6 307.6H263.7" stroke="#3CC65A" stroke-width="1.3" stroke-linecap="round"/>
<path d="M267.6 309L273.8 301.8" stroke="#E8284A" stroke-width="2.6"/>
<path d="M273.4 302.2L275 300.3" stroke="#666" stroke-width="2.4"/>
<path d="M266.3 310.6L267 308.2L268.9 309.8Z" fill="#F4C43A"/>
</g>
<!-- checkbox -->
<rect x="509.5" y="690.5" width="15" height="15" fill="#fff" stroke="#555"/>
<path d="M511.8 697.5L515.3 701.6L521.8 693.2" fill="none" stroke="#222" stroke-width="2.2"/>
<!-- plus btn -->
<rect x="661.5" y="688.5" width="19" height="19" rx="5" fill="#AFCBD1" stroke="#3D7184"/>
<path d="M671 691.5V704.5M664.5 698H677.5" stroke="#5A9A6A" stroke-width="2"/>
<!-- db -->
<ellipse cx="697" cy="691.5" rx="6" ry="2.5" fill="#D9A86A"/>
<path d="M691 691.5V703.5A6 2.5 0 0 0 703 703.5V691.5" fill="#D9A86A"/>
<path d="M691 695.5A6 2.5 0 0 0 703 695.5M691 699.5A6 2.5 0 0 0 703 699.5" fill="none" stroke="#F3D9B5" stroke-width="0.9"/>
<path d="M700 704A4 4 0 0 1 707 701M707 705A4 4 0 0 1 700 708" fill="none" stroke="#4DAA6A" stroke-width="1.4"/>
<!-- minus -->
<circle cx="725" cy="698" r="7.5" fill="#E6B2AD"/>
<path d="M720.5 698H729.5" stroke="#fff" stroke-width="2.4"/>
<!-- printer -->
<g id="prn">
<path d="M828.2 689.6H835.7V694H828.2Z" fill="#E8E8E4"/>
<path d="M831 693.5L835.7 690.2V694Z" fill="#D8D8D2"/>
<rect x="824.1" y="694.1" width="15.8" height="8.6" rx="0.8" fill="#5E6280"/>
<rect x="827" y="694.1" width="10" height="6" fill="#9E9FB2"/>
<rect x="827" y="694.1" width="10" height="2.5" fill="#B4B5C4"/>
<rect x="827.2" y="701.8" width="9.6" height="4.9" fill="#fff" stroke="#6A6E88" stroke-width="0.9"/>
<path d="M829 704.5H835" stroke="#8A8EA0" stroke-width="0.8"/>
</g>
<!-- table -->
<rect x="850.6" y="692.6" width="17" height="12" rx="0.8" fill="#fff" stroke="#4A86D0" stroke-width="1.1"/>
<path d="M851 701.6H867.5M856.4 699V704.5M861.5 699V704.5" stroke="#8DB5E6" stroke-width="0.9"/>
<rect x="850.3" y="695.2" width="17.6" height="3.6" fill="#EFA848"/>
<path d="M859.1 694.8V690.6" stroke="#3E7ED0" stroke-width="1.8"/>
<path d="M856.2 692L859.1 689.2L862 692Z" fill="#3E7ED0"/>
</svg>
<div class="a" style="left:533px;top:686px;width:125px;height:25px;background:#fff;border:1px solid #A5A5A5"></div>
<div class="t" style="left:537.5px;top:691.5px;font-size:14.5px;color:#333">Standard</div>
<div class="dd" style="left:643px;top:697px"></div>
<div class="a" style="left:745px;top:684px;width:70px;height:27px;background:#fff;border:1px solid #3D7184"></div>
<div class="t" style="left:752px;top:690.5px;font-size:14.2px;color:#333">100%</div>
<div class="dd" style="left:798px;top:695px"></div>
<div class="a" style="left:7px;top:713px;width:20px;height:26px;background:#F7F7F7;border-top:1px solid #3D7184;border-bottom:1px solid #3D7184"></div>
<div class="a" style="left:27px;top:713px;width:1670px;height:26px;background:#AFCBD1;border-top:1px solid #3D7184;border-bottom:1px solid #3D7184"></div>
<div class="a" style="left:1676px;top:713px;width:21px;height:26px;background:#F7F7F7;border-top:1px solid #3D7184;border-bottom:1px solid #3D7184"></div>
<div class="t" style="left:27px;width:112px;text-align:center;top:720.5px;font-size:12.8px;font-weight:bold;color:#111">Vare nummer</div>
<div class="t" style="left:139px;width:285px;text-align:center;top:720.5px;font-size:12.8px;font-weight:bold;color:#111">Tekst</div>
<div class="t" style="left:424px;width:125px;text-align:center;top:720.5px;font-size:12.8px;font-weight:bold;color:#111">Antal (L.Enhed)</div>
<div class="t" style="left:549px;width:125px;text-align:center;top:720.5px;font-size:12.8px;font-weight:bold;color:#111">Lev.Antal (L.Enh...</div>
<div class="t" style="left:674px;width:148px;text-align:center;top:720.5px;font-size:12.8px;font-weight:bold;color:#111">A'pris</div>
<div class="t" style="left:822px;width:68px;text-align:center;top:720.5px;font-size:12.8px;font-weight:bold;color:#111">Rabat %</div>
<div class="t" style="left:890px;width:170px;text-align:center;top:720.5px;font-size:12.8px;font-weight:bold;color:#111">Netto m. afgift</div>
<div class="t" style="left:1060px;width:136px;text-align:center;top:720.5px;font-size:12.8px;font-weight:bold;color:#111">I. ordre</div>
<div class="t" style="left:1196px;width:100px;text-align:center;top:720.5px;font-size:12.8px;font-weight:bold;color:#111">&Oslash;nsket l.dato</div>
<div class="t" style="left:1296px;width:114px;text-align:center;top:720.5px;font-size:12.8px;font-weight:bold;color:#111">Lagersted</div>
<div class="t" style="left:1410px;width:37px;text-align:center;top:720.5px;font-size:12.8px;font-weight:bold;color:#111">H...</div>
<div class="t" style="left:1447px;width:229px;text-align:center;top:720.5px;font-size:12.8px;font-weight:bold;color:#111">Emballageprofil</div>
<div class="a" style="left:7px;top:739px;width:20px;height:52px;background:#fff"></div>
<div class="a" style="left:27px;top:739px;width:1649px;height:25px;background:#B0E0E6"></div>
<div class="a" style="left:27px;top:765px;width:1649px;height:25px;background:#E0EEF2"></div>
<div class="a" style="left:27px;top:765px;width:112px;height:25px;background:#9FCCFA"></div>
<div class="a" style="left:890px;top:739px;width:170px;height:25px;background:#fff"></div>
<div class="a" style="left:890px;top:765px;width:170px;height:25px;background:#40E0D0"></div>
<div class="a" style="left:1296px;top:765px;width:114px;height:25px;background:#D3D3D3"></div>
<div class="a" style="left:1447px;top:765px;width:229px;height:25px;background:#D3D3D3"></div>
<div class="a" style="left:27px;top:764px;width:1649px;height:1px;background:#111"></div>
<div class="a" style="left:27px;top:790px;width:1649px;height:1px;background:#111"></div>
<div class="a" style="left:27px;top:713px;width:1px;height:26px;background:#3D7184"></div>
<div class="a" style="left:139px;top:713px;width:1px;height:26px;background:#3D7184"></div>
<div class="a" style="left:139px;top:739px;width:1px;height:52px;background:#111"></div>
<div class="a" style="left:424px;top:713px;width:1px;height:26px;background:#3D7184"></div>
<div class="a" style="left:424px;top:739px;width:1px;height:52px;background:#111"></div>
<div class="a" style="left:549px;top:713px;width:1px;height:26px;background:#3D7184"></div>
<div class="a" style="left:549px;top:739px;width:1px;height:52px;background:#111"></div>
<div class="a" style="left:674px;top:713px;width:1px;height:26px;background:#3D7184"></div>
<div class="a" style="left:674px;top:739px;width:1px;height:52px;background:#111"></div>
<div class="a" style="left:822px;top:713px;width:1px;height:26px;background:#3D7184"></div>
<div class="a" style="left:822px;top:739px;width:1px;height:52px;background:#111"></div>
<div class="a" style="left:890px;top:713px;width:1px;height:26px;background:#3D7184"></div>
<div class="a" style="left:890px;top:739px;width:1px;height:52px;background:#111"></div>
<div class="a" style="left:1060px;top:713px;width:1px;height:26px;background:#3D7184"></div>
<div class="a" style="left:1060px;top:739px;width:1px;height:52px;background:#111"></div>
<div class="a" style="left:1196px;top:713px;width:1px;height:26px;background:#3D7184"></div>
<div class="a" style="left:1196px;top:739px;width:1px;height:52px;background:#111"></div>
<div class="a" style="left:1296px;top:713px;width:1px;height:26px;background:#3D7184"></div>
<div class="a" style="left:1296px;top:739px;width:1px;height:52px;background:#111"></div>
<div class="a" style="left:1410px;top:713px;width:1px;height:26px;background:#3D7184"></div>
<div class="a" style="left:1410px;top:739px;width:1px;height:52px;background:#111"></div>
<div class="a" style="left:1447px;top:713px;width:1px;height:26px;background:#3D7184"></div>
<div class="a" style="left:1447px;top:739px;width:1px;height:52px;background:#111"></div>
<div class="a" style="left:1676px;top:713px;width:1px;height:26px;background:#3D7184"></div>
<div class="a" style="left:15px;top:748px;width:0;height:0;border-top:4.5px solid transparent;border-bottom:4.5px solid transparent;border-left:5px solid #333"></div>
<div class="t" style="left:32px;top:746px;font-size:13px;color:#444">80-1</div>
<div class="t" style="left:144px;top:746px;font-size:13px;color:#444">Vand 0,5 liter</div>
<div class="t" style="left:424px;width:119px;text-align:right;top:746px;font-size:13px;color:#444">10,00</div>
<div class="t" style="left:549px;width:119px;text-align:right;top:746px;font-size:13px;color:#444">10,00</div>
<div class="t" style="left:674px;width:142px;text-align:right;top:746px;font-size:13px;color:#444">10,00</div>
<div class="t" style="left:822px;width:62px;text-align:right;top:746px;font-size:13px;color:#444">0,00</div>
<div class="t" style="left:890px;width:164px;text-align:right;top:746px;font-size:13px;color:#444">100,00</div>
<div class="t" style="left:1060px;width:130px;text-align:right;top:746px;font-size:13px;color:#444">0</div>
<div class="t" style="left:1201px;top:746px;font-size:13px;color:#444">18.10.2025</div>
<div class="a" style="left:1419px;top:743px;width:18px;height:18px;background:#fff;border:1px solid #555"></div>
<div class="t" style="left:1452px;top:746px;font-size:13px;color:#444">VANDFLASKE</div>
<div class="t" style="left:32px;top:772px;font-size:13px;color:#444">60-01</div>
<div class="t" style="left:144px;top:772px;font-size:13px;color:#444">Dagligstue</div>
<div class="t" style="left:424px;width:119px;text-align:right;top:772px;font-size:13px;color:#444">5,00</div>
<div class="t" style="left:549px;width:119px;text-align:right;top:772px;font-size:13px;color:#444">5,00</div>
<div class="t" style="left:674px;width:142px;text-align:right;top:772px;font-size:13px;color:#444">3.435,00</div>
<div class="t" style="left:822px;width:62px;text-align:right;top:772px;font-size:13px;color:#444">0,00</div>
<div class="t" style="left:890px;width:164px;text-align:right;top:772px;font-size:13px;color:#444">17.175,00</div>
<div class="t" style="left:1060px;width:130px;text-align:right;top:772px;font-size:13px;color:#444">0</div>
<div class="t" style="left:1201px;top:772px;font-size:13px;color:#444">18.10.2025</div>
<div class="a" style="left:1419px;top:769px;width:18px;height:18px;background:#fff;border:1px solid #555"></div>
<div class="a" style="left:7px;top:791px;width:1669px;height:192px;background:#D3D3D3"></div>
<div class="a" style="left:1676px;top:739px;width:21px;height:244px;background:#E8E8E8"></div>
<div class="a" style="left:1677px;top:740px;width:19px;height:19px;background:#D5DFE2;border:1px solid #B9C7CB"></div>
<div class="a" style="left:1682px;top:746px;width:0;height:0;border-left:4.5px solid transparent;border-right:4.5px solid transparent;border-bottom:5px solid #333"></div>
<div class="a" style="left:1677px;top:961px;width:19px;height:20px;background:#E4EAEC;border:1px solid #C5CDD0"></div>
<div class="a" style="left:1682px;top:969px;width:0;height:0;border-left:4.5px solid transparent;border-right:4.5px solid transparent;border-top:5px solid #333"></div>
<div class="a" style="left:1697px;top:713px;width:1px;height:325px;background:#3D7184"></div>
<div class="a" style="left:7px;top:983px;width:1690px;height:34px;background:#fff"></div>
<div class="a" style="left:428px;top:986px;width:119px;height:27px;background:#EBEBEB;border:1px solid #D8D8D8"></div>
<div class="t" style="left:428px;width:114px;text-align:right;top:994px;font-size:13px;color:#444">15,00</div>
<div class="a" style="left:553px;top:986px;width:119px;height:27px;background:#EBEBEB;border:1px solid #D8D8D8"></div>
<div class="t" style="left:553px;width:114px;text-align:right;top:994px;font-size:13px;color:#444">15,00</div>
<div class="a" style="left:678px;top:986px;width:142px;height:27px;background:#EBEBEB;border:1px solid #D8D8D8"></div>
<div class="t" style="left:678px;width:137px;text-align:right;top:994px;font-size:13px;color:#444">3.445,00</div>
<div class="a" style="left:894px;top:986px;width:164px;height:27px;background:#EBEBEB;border:1px solid #D8D8D8"></div>
<div class="t" style="left:894px;width:159px;text-align:right;top:994px;font-size:13px;color:#444">17.275,00</div>
<div class="a" style="left:7px;top:1017px;width:1690px;height:20px;background:#E8E8E8"></div>
<div class="a" style="left:8px;top:1017px;width:19px;height:19px;background:#D5E0E5;border:1px solid #B9C5CA"></div>
<div class="a" style="left:14px;top:1022px;width:0;height:0;border-top:4.5px solid transparent;border-bottom:4.5px solid transparent;border-right:5px solid #333"></div>
<div class="a" style="left:1484px;top:1017px;width:19px;height:19px;background:#E4E8EA;border:1px solid #B9C5CA"></div>
<div class="a" style="left:1492px;top:1022px;width:0;height:0;border-top:4.5px solid transparent;border-bottom:4.5px solid transparent;border-left:5px solid #333"></div>
<div class="a" style="left:1503px;top:1016px;width:194px;height:21px;background:#AFCBD1"></div>
<div class="a" style="left:1564px;top:1017px;width:73px;height:20px;background:#fff"></div>
<div class="t" style="left:1568px;top:1021px;font-size:13.5px;color:#333">Post 1 af 2</div>
<svg style="left:1500px;top:1016px" width="200" height="22">
<path d="M8 5V16" stroke="#8FAAB2" stroke-width="1.5"/><path d="M14.5 5V16L9 10.5Z M20 5V16L14.5 10.5Z" fill="#8FAAB2"/>
<path d="M33.5 5V16L28 10.5Z M39 5V16L33.5 10.5Z" fill="#8FAAB2"/>
<path d="M57 5V16L51.5 10.5Z" fill="#8FAAB2"/>
<path d="M144.5 5V16L150 10.5Z" fill="#333"/>
<path d="M161.5 5V16L167 10.5Z M167 5V16L172.5 10.5Z" fill="#333"/>
<path d="M180.5 5V16L186 10.5Z M186 5V16L191.5 10.5Z" fill="#333"/><path d="M192.2 5V16" stroke="#333" stroke-width="1.4"/>
</svg>
<div class="a" style="left:6px;top:1037px;width:1692px;height:1px;background:#3D7184"></div>
<div class="a" style="left:5px;top:1043px;width:831px;height:1px;background:#3D7184"></div>
<div class="a" style="left:5px;top:1043px;width:1831px;height:53px;border-top:1px solid #3D7184;border-right:1px solid #3D7184;border-bottom:2px solid #3D7184"></div>
<div class="a" style="left:38px;top:1056px;width:125px;height:25px;background:#AFCBD1;border:1px solid #3D7184;border-radius:6px"></div>
<svg style="left:46px;top:1060px" width="12" height="16" fill="none" stroke="#3D7184" stroke-width="1"><rect x="0.5" y="2.5" width="10" height="12.5" rx="1"/><path d="M3.5 2.5V1.5H7.5V2.5" /><path d="M2.5 6H3.5M2.5 8.5H3.5M2.5 11H3.5M5 6H8.5M5 8.5H8.5M5 12H8.5"/></svg>
<div class="t" style="left:65px;top:1062px;font-size:12.8px;line-height:14px;color:#3A3A3A">Vis Tilb<u>u</u>d</div>
<div class="a" style="left:169px;top:1056px;width:125px;height:25px;background:#AFCBD1;border:1px solid #3D7184;border-radius:6px"></div>
<svg style="left:177px;top:1060px" width="12" height="16" fill="none" stroke="#3D7184" stroke-width="1"><rect x="0.5" y="2.5" width="10" height="12.5" rx="1"/><path d="M3.5 2.5V1.5H7.5V2.5" /><path d="M2.5 6H3.5M2.5 8.5H3.5M2.5 11H3.5M5 6H8.5M5 8.5H8.5M5 12H8.5"/></svg>
<div class="t" style="left:196px;top:1062px;font-size:12.8px;line-height:14px;color:#3A3A3A">Vis Faktu<u>r</u>a(er)</div>
<div class="a" style="left:300px;top:1056px;width:125px;height:25px;background:#AFCBD1;border:1px solid #3D7184;border-radius:6px"></div>
<svg style="left:308px;top:1060px" width="12" height="16" fill="none" stroke="#3D7184" stroke-width="1"><rect x="0.5" y="2.5" width="10" height="12.5" rx="1"/><path d="M3.5 2.5V1.5H7.5V2.5" /><path d="M2.5 6H3.5M2.5 8.5H3.5M2.5 11H3.5M5 6H8.5M5 8.5H8.5M5 12H8.5"/></svg>
<div class="t" style="left:327px;top:1062px;font-size:12.8px;line-height:14px;color:#3A3A3A">Vis Forsendelser</div>
<div class="a" style="left:431px;top:1056px;width:125px;height:25px;background:#AFCBD1;border:1px solid #3D7184;border-radius:6px"></div>
<svg style="left:439px;top:1060px" width="12" height="16" fill="none" stroke="#3D7184" stroke-width="1"><rect x="0.5" y="2.5" width="10" height="12.5" rx="1"/><path d="M3.5 2.5V1.5H7.5V2.5" /><path d="M2.5 6H3.5M2.5 8.5H3.5M2.5 11H3.5M5 6H8.5M5 8.5H8.5M5 12H8.5"/></svg>
<div class="t" style="left:458px;top:1062px;font-size:12.8px;line-height:14px;color:#3A3A3A">Modt. <u>F</u>akt.</div>
<div class="a" style="left:0;top:1103px;width:1915px;height:33px;background:#EBEBEB;border-top:1px solid #3D7184"></div>
<div class="t" style="left:4.6px;top:1115.5px;font-size:14.4px;color:#444">Bruger:&nbsp; super&nbsp; Dato:&nbsp; 16. november 2025</div>
<div class="a" style="left:279px;top:1106px;width:1px;height:30px;background:#D0D0D0"></div>
<div class="a" style="left:288px;top:1108px;width:476px;height:28px;background:#0000FF"></div>
<div class="t" style="left:288px;top:1115.5px;font-size:14.4px;color:#fff">80-1, Vand 0,5 liter, Diverse, PF, , -32,00, 0,00, 0,00, -57,00, -57,00, -82,00</div>
<div class="t" style="left:1853px;top:1115px;font-size:14.8px;font-weight:bold;color:#0A8A0A">Online</div>

<svg style="left:1900px;top:1120px" width="15" height="16" fill="#666"><rect x="13.4" y="6.4" width="1.2" height="1.2"/><rect x="10.9" y="9.4" width="1.2" height="1.2"/><rect x="13.4" y="9.4" width="1.2" height="1.2"/><rect x="8.4" y="11.9" width="1.2" height="1.2"/><rect x="10.9" y="11.9" width="1.2" height="1.2"/><rect x="13.4" y="11.9" width="1.2" height="1.2"/><rect x="5.9" y="14.4" width="1.2" height="1.2"/><rect x="8.4" y="14.4" width="1.2" height="1.2"/><rect x="10.9" y="14.4" width="1.2" height="1.2"/><rect x="13.4" y="14.4" width="1.2" height="1.2"/></svg>
<!--END-->
</body></html>
